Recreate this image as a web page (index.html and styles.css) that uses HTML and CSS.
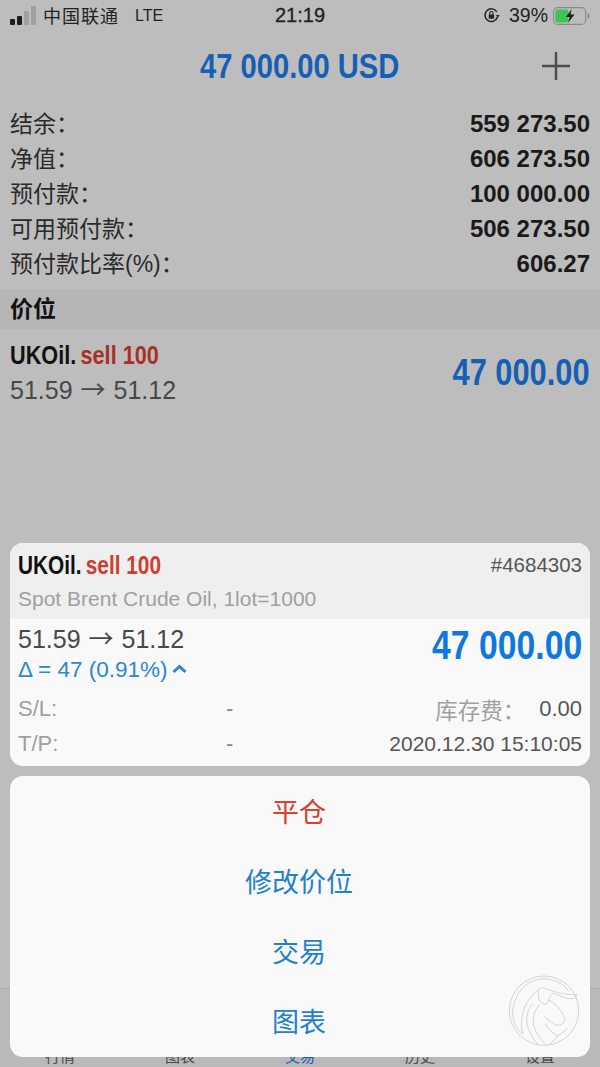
FILE: index.html
```html
<!DOCTYPE html>
<html lang="zh-CN">
<head>
    <meta charset="UTF-8">
    <meta name="viewport" content="width=device-width, initial-scale=1.0">
    <title>交易</title>
    <link rel="stylesheet" href="styles.css">
</head>
<body>
    <div class="screen">
        <div class="status">
            <div class="status-left">
                <span class="signal"><i class="on s1"></i><i class="on s2"></i><i class="s3"></i><i class="s4"></i></span>
                <span class="carrier">中国联通</span>
                <span class="net">LTE</span>
            </div>
            <div class="clock">21:19</div>
            <div class="status-right">
                <svg class="lock" width="17" height="17" viewBox="0 0 16 16">
                    <path d="M13.6 9.500A6 6 0 1 1 13 4.600" fill="none" stroke="#222" stroke-width="1.400"/>
                    <path d="M15.600 7.600 L12.200 7.600 L13.900 10 Z" fill="#222"/>
                    <rect x="5.400" y="7" width="5" height="4" fill="#222"/>
                    <path d="M6.300 7V5.900a1.600 1.600 0 0 1 3.200 0V7" fill="none" stroke="#222" stroke-width="1"/>
                </svg>
                <span class="pct">39%</span>
                <svg class="battery" width="37" height="18" viewBox="0 0 37 18">
                    <rect x="0.600" y="0.600" width="32" height="16.800" rx="4" fill="none" stroke="#8a8a8a" stroke-width="1.100"/>
                    <rect x="2.400" y="2.400" width="13" height="13.200" rx="2" fill="#3fc552"/>
                    <path d="M34.500 6v6c1.300-.4 2-1.600 2-3s-.7-2.600-2-3z" fill="#8a8a8a"/>
                    <path d="M18.800 2 L12.800 10 L16.600 10 L15 16 L21.500 7.600 L17.500 7.600 Z" fill="#222"/>
                </svg>
            </div>
        </div>

        <header class="topbar">
            <h1 class="total">47 000.00 USD</h1>
            <svg class="plus" width="30" height="30" viewBox="0 0 30 30">
                <path d="M15 1V29M1 15H29" stroke="#4d4d4d" stroke-width="2.400"/>
            </svg>
        </header>

        <dl class="summary">
            <div class="row"><dt>结余：</dt><dd>559 273.50</dd></div>
            <div class="row"><dt>净值：</dt><dd>606 273.50</dd></div>
            <div class="row"><dt>预付款：</dt><dd>100 000.00</dd></div>
            <div class="row"><dt>可用预付款：</dt><dd>506 273.50</dd></div>
            <div class="row"><dt>预付款比率(%)：</dt><dd>606.27</dd></div>
        </dl>

        <div class="band">价位</div>

        <div class="position">
            <div>
                <div class="pos-title">UKOil. <span class="sell">sell 100</span></div>
                <div class="pos-prices">51.59 <span class="arrow">→</span> 51.12</div>
            </div>
            <div class="pos-profit">47 000.00</div>
        </div>

        <nav class="tabs">
            <span>行情</span><span>图表</span><span class="active">交易</span><span>历史</span><span>设置</span>
        </nav>

        <div class="sheet">
            <section class="card">
                <div class="card-head">
                    <div class="head-line">
                        <div class="card-title">UKOil. <span class="sell-bright">sell 100</span></div>
                        <div class="ticket">#4684303</div>
                    </div>
                    <div class="card-desc">Spot Brent Crude Oil, 1lot=1000</div>
                </div>
                <div class="card-body">
                    <div class="price-line">
                        <div>
                            <div class="card-prices">51.59 <span class="arrow">→</span> 51.12</div>
                            <div class="delta">Δ = 47 (0.91%)
                                <svg class="chevron" width="17" height="10" viewBox="0 0 16 10"><path d="M2 8L8 2.500L14 8" fill="none" stroke="#2a86d8" stroke-width="3"/></svg>
                            </div>
                        </div>
                        <div class="card-profit">47 000.00</div>
                    </div>
                    <div class="meta">
                        <span class="m-label">S/L:</span><span class="m-dash">-</span><span class="m-right"><em>库存费：</em><b class="swap">0.00</b></span>
                    </div>
                    <div class="meta">
                        <span class="m-label">T/P:</span><span class="m-dash">-</span><span class="m-right"><b>2020.12.30 15:10:05</b></span>
                    </div>
                </div>
            </section>

            <section class="actions">
                <div class="action danger">平仓</div>
                <div class="action">修改价位</div>
                <div class="action">交易</div>
                <div class="action">图表</div>
            </section>
        </div>

        <!-- drawn in the reference's 3x crop units -->
        <svg class="mark" width="72" height="72" viewBox="324 75 216 216" fill="none" stroke="#cdcdcd" stroke-width="2.600">
            <circle cx="432" cy="182" r="104"/>
            <path d="M506 122A92 92 0 0 0 345 152C330 190 340 232 368 252"/>
            <path d="M415 118C395 135 375 160 368 190C363 212 364 232 368 250"/>
            <path d="M398 160C382 182 376 205 384 232C390 252 402 270 416 286"/>
            <path d="M418 165C402 182 396 205 402 228C408 250 424 272 440 287"/>
            <path d="M415 130C412 118 420 112 432 114C455 122 490 136 530 134C528 142 522 147 512 146C495 146 478 134 458 130"/>
            <path d="M415 130C414 145 418 158 432 162C440 164 444 158 446 150C447 142 454 134 458 130"/>
            <path d="M446 150C462 158 478 172 488 192C496 204 496 216 486 222C476 228 466 226 456 218C448 212 440 206 434 200"/>
            <path d="M436 222C446 238 458 250 472 258C484 252 494 244 502 234"/>
            <path d="M472 258C464 270 454 280 442 287"/>
        </svg>
    </div>
</body>
</html>
```

FILE: styles.css
```css
* {
    box-sizing: border-box;
    margin: 0;
    padding: 0;
}
body {
    font-family: 'Liberation Sans', 'Noto Sans CJK SC', sans-serif;
    background: #bdbdbd;
}
.screen {
    position: relative;
    width: 600px;
    height: 1067px;
    overflow: hidden;
    background: #bdbdbd;
    color: #1a1a1a;
}

/* Status bar */
.status {
    height: 33px;
    display: grid;
    grid-template-columns: 1fr auto 1fr;
    align-items: center;
    padding: 0 10px 2px;
    font-size: 18px;
    color: #222;
}
.status-left {
    display: flex;
    align-items: center;
}
.signal {
    display: flex;
    align-items: flex-end;
    gap: 2px;
    width: 29px;
    height: 19px;
}
.signal i {
    width: 5px;
    background: #a0a0a0;
    border-radius: 1px;
}
.signal .on { background: #1c1c1c; }
.s1 { height: 6px; }
.s2 { height: 9px; }
.s3 { height: 14px; }
.s4 { height: 19px; }
.carrier {
    margin-left: 4px;
    letter-spacing: 1px;
    padding-bottom: 2px;
}
.net {
    margin-left: 16px;
    font-size: 16px;
}
.clock {
    font-size: 20px;
    -webkit-text-stroke: 0.3px #222;
}
.status-right {
    display: flex;
    align-items: center;
    justify-content: flex-end;
    gap: 5px;
}
.pct { font-size: 19.500px; margin-left: 4px; }

/* Header */
.topbar {
    position: relative;
    height: 66px;
    display: flex;
    align-items: center;
    justify-content: center;
}
.total {
    font-size: 35px;
    font-weight: bold;
    color: #1560b4;
    transform: scaleX(0.833);
}
.plus {
    position: absolute;
    right: 29px;
    top: 18px;
}

/* Summary rows */
.summary {
    padding: 7px 10px 8px;
}
.row {
    height: 35px;
    display: flex;
    align-items: center;
    justify-content: space-between;
    font-size: 23px;
}
.row dt {
    padding-bottom: 4px;
    color: #2a2a2a;
}
.row dd {
    font-weight: bold;
    font-size: 24px;
    color: #1a1a1a;
}
.band {
    height: 40px;
    display: flex;
    align-items: center;
    padding: 0 10px 4px;
    background: #b6b6b6;
    font-size: 23px;
    font-weight: bold;
    color: #111;
}

/* Position row */
.position {
    display: flex;
    align-items: center;
    justify-content: space-between;
    padding: 11px 10px 0;
}
.pos-title, .card-title {
    font-weight: bold;
    font-size: 26px;
    word-spacing: -2px;
    color: #111;
    transform: scaleX(0.833);
    transform-origin: left center;
    white-space: nowrap;
}
.card-title { font-size: 25px; }
.sell, .sell-bright { word-spacing: 0; }
.sell { color: #a83028; }
.sell-bright { color: #cf3d30; }
.pos-prices {
    margin-top: 5px;
    font-size: 25px;
    color: #484848;
}
.arrow {
    font-family: 'Noto Sans CJK SC', sans-serif;
    line-height: 1;
    margin: 0 1px;
}
.pos-profit, .card-profit {
    font-weight: bold;
    font-size: 37px;
    color: #1560b4;
    transform: scaleX(0.833);
    transform-origin: right center;
}

/* Tab bar behind the sheet */
.tabs {
    position: absolute;
    left: 0;
    right: 0;
    top: 988px;
    height: 79px;
    display: grid;
    grid-template-columns: repeat(5, 1fr);
    padding-top: 56px;
    border-top: 1px solid #a8a8a8;
    background: #b9b9b9;
    text-align: center;
    font-size: 15px;
    color: #4a4a4a;
}
.tabs .active { color: #1560b4; }

/* Action sheet */
.sheet {
    position: absolute;
    left: 10px;
    right: 10px;
    top: 543px;
    display: flex;
    flex-direction: column;
    gap: 10px;
}
.card {
    height: 223px;
    border-radius: 13px;
    overflow: hidden;
    background: #f9f9f9;
}
.card-head {
    height: 76px;
    padding: 8px 8px 0;
    background: #efefef;
}
.head-line {
    display: flex;
    justify-content: space-between;
}
.ticket {
    font-size: 20.500px;
    padding-top: 2px;
    color: #555;
}
.card-desc {
    margin-top: 7px;
    font-size: 21px;
    color: #a0a0a0;
}
.card-body {
    padding: 6px 8px 0;
}
.price-line {
    display: flex;
    justify-content: space-between;
    height: 66px;
}
.card-prices {
    font-size: 25px;
    color: #484848;
}
.delta {
    margin-top: 3px;
    font-size: 22.500px;
    color: #2a86d8;
}
.chevron {
    margin-left: -3px;
    vertical-align: 3px;
}
.card-profit {
    font-size: 40.500px;
    color: #0f78e0;
    margin-top: -3px;
    height: 46px;
}
.meta {
    height: 35px;
    display: grid;
    grid-template-columns: 208px 20px 1fr;
    align-items: center;
    font-size: 22px;
    color: #a0a0a0;
}
.m-dash { color: #888; }
.m-right {
    display: flex;
    justify-content: flex-end;
    align-items: center;
    gap: 14px;
    font-size: 21px;
}
.m-right em {
    font-style: normal;
    font-size: 22.500px;
}
.m-right b {
    font-weight: normal;
    color: #555;
}
.m-right .swap { font-size: 22px; }
.actions {
    height: 281px;
    border-radius: 13px;
    background: #f9f9f9;
    display: grid;
    grid-template-rows: repeat(4, 1fr);
}
.action {
    display: flex;
    align-items: center;
    justify-content: center;
    padding: 0 2px 2px 0;
    font-size: 27px;
    color: #2380d0;
}
.action.danger { color: #d8402f; }

/* Watermark */
.mark {
    position: absolute;
    left: 508px;
    top: 975px;
}
```
